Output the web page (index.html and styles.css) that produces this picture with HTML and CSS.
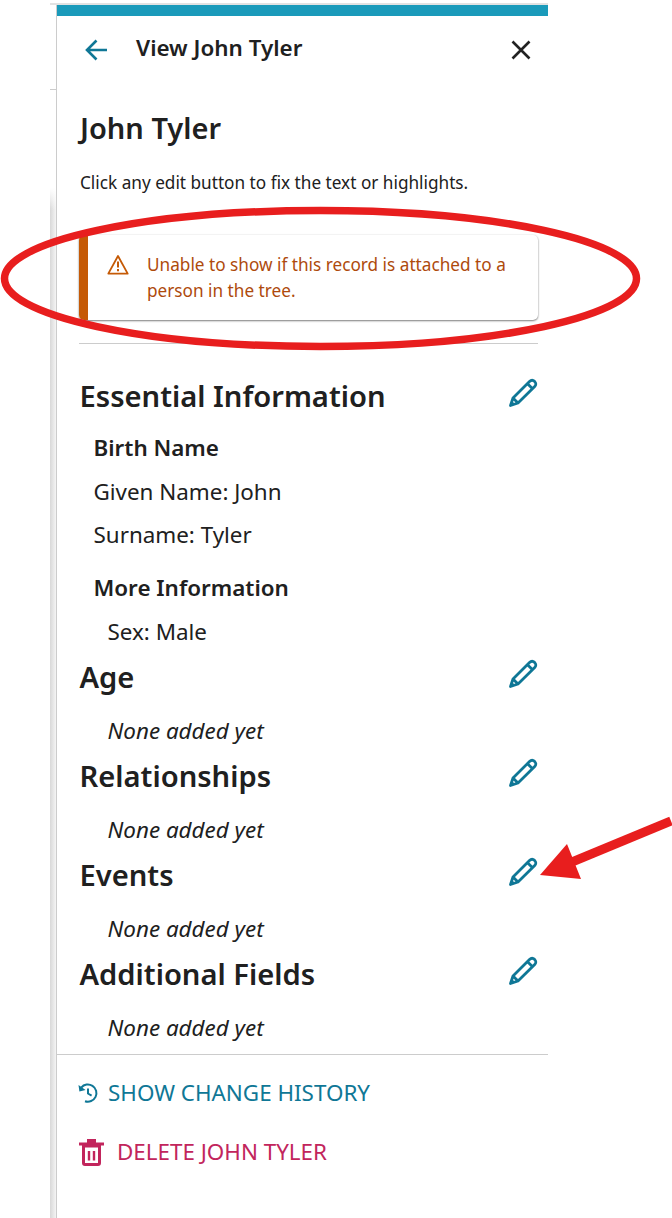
FILE: index.html
```html
<!DOCTYPE html>
<html lang="en">
<head>
<meta charset="utf-8">
<title>View John Tyler</title>
<link rel="stylesheet" href="styles.css">
</head>
<body>
  <svg width="0" height="0" class="defs">
    <symbol id="pencil" viewBox="0 0 30 30">
      <path d="M2.5 27.5 L5 20 L21.5 3.6 C23 2.1 25 2 26.6 3.4 C28.2 4.9 28.2 7 26.7 8.6 L10 25 Z M5 20 L10 25 M19.5 5.8 L24.6 10.8" fill="none" stroke="currentColor" stroke-width="2.8" stroke-linejoin="round"/>
      <path d="M2 28 L3.6 22.6 L7.4 26.4 Z" fill="currentColor"/>
    </symbol>
  </svg>

  <div class="backdrop-top"></div>
  <div class="backdrop-rule"></div>
  <div class="backdrop-side"></div>

  <div class="panel">
    <div class="top-bar"></div>
    <div class="header">
      <svg class="back" width="23" height="22" viewBox="0 0 23 22"><path d="M22 11 H2 M11.5 1.5 L2 11 L11.5 20.500" fill="none" stroke="#0f7796" stroke-width="2.6"/></svg>
      <div class="header-title">View John Tyler</div>
      <svg class="close" width="20" height="20" viewBox="0 0 20 20"><path d="M1.5 1.5 L18.5 18.5 M18.5 1.5 L1.5 18.5" fill="none" stroke="#222" stroke-width="2.6"/></svg>
    </div>

    <div class="content">
      <h1>John Tyler</h1>
      <p class="hint">Click any edit button to fix the text or highlights.</p>

      <div class="alert">
        <svg class="alert-icon" width="22" height="21" viewBox="0 0 22 21">
          <path d="M11 2 L20.7 19.6 H1.3 Z" fill="none" stroke="#c55a06" stroke-width="1.8" stroke-linejoin="round"/>
          <path d="M11 7.5 V13.5 M11 15 V17.2" fill="none" stroke="#c55a06" stroke-width="2"/>
        </svg>
        <div class="alert-text">Unable to show if this record is attached to a person in the tree.</div>
      </div>
      <hr class="rule">

      <div class="section-head first">
        <h2>Essential Information</h2>
        <svg class="edit"><use href="#pencil"/></svg>
      </div>
      <div class="group">
        <h3>Birth Name</h3>
        <p class="field">Given Name: John</p>
        <p class="field">Surname: Tyler</p>
        <h3 class="more">More Information</h3>
        <p class="field sex">Sex: Male</p>
      </div>

      <div class="section-head">
        <h2>Age</h2>
        <svg class="edit"><use href="#pencil"/></svg>
      </div>
      <p class="empty">None added yet</p>

      <div class="section-head">
        <h2>Relationships</h2>
        <svg class="edit"><use href="#pencil"/></svg>
      </div>
      <p class="empty">None added yet</p>

      <div class="section-head">
        <h2>Events</h2>
        <svg class="edit"><use href="#pencil"/></svg>
      </div>
      <p class="empty">None added yet</p>

      <div class="section-head">
        <h2>Additional Fields</h2>
        <svg class="edit"><use href="#pencil"/></svg>
      </div>
      <p class="empty">None added yet</p>
    </div>

    <div class="footer">
      <a class="action history" href="#">
        <svg width="22" height="22" viewBox="0 0 22 22"><path d="M4.2 5.6 A8.6 8.6 0 1 1 8 19.2 M11 6.5 V11.5 L14.6 13.6" fill="none" stroke="currentColor" stroke-width="2"/><path d="M1.5 3 L2.4 9.4 L8.6 8 Z" fill="currentColor"/></svg>
        SHOW CHANGE HISTORY
      </a>
      <a class="action delete" href="#">
        <svg width="26" height="28" viewBox="0 0 26 28"><path d="M0 4.5 H25 V7.500 H0 Z M8 1 H17 V4.500 H8 Z" fill="currentColor"/><path d="M4.500 8 H20.500 V25 Q20.500 26.500 19 26.500 H6 Q4.500 26.500 4.500 25 Z" fill="none" stroke="currentColor" stroke-width="3"/><path d="M10 13 V22.500 M15 13 V22.500" fill="none" stroke="currentColor" stroke-width="2.4"/></svg>
        DELETE JOHN TYLER
      </a>
    </div>
  </div>

  <!-- red markup drawn on top of the screenshot -->
  <svg class="markup" width="672" height="1218" viewBox="0 0 672 1218">
    <ellipse cx="320.500" cy="278.500" rx="316" ry="68" fill="none" stroke="#e81e1e" stroke-width="7.500"/>
    <path d="M671 821 L572 862" stroke="#e81e1e" stroke-width="9" fill="none"/>
    <path d="M540 875 L567 844 L581 879 Z" fill="#e81e1e"/>
  </svg>
</body>
</html>
```

FILE: styles.css
```css
html, body {
    margin: 0;
    padding: 0;
}

body {
    width: 672px;
    height: 1218px;
    overflow: hidden;
    position: relative;
    background-color: #fff;
    font-family: "Noto Sans", sans-serif;
    color: #202020;
}

.defs {
    position: absolute;
}

.backdrop-top {
    position: absolute;
    left: 50px;
    top: 3px;
    width: 498px;
    height: 2px;
    background-color: #e2e2e2;
}

.backdrop-rule {
    position: absolute;
    left: 50px;
    top: 89px;
    width: 6px;
    height: 1px;
    background-color: #ccc;
}

.backdrop-side {
    position: absolute;
    left: 50px;
    top: 188px;
    width: 6px;
    height: 1030px;
    background:
        linear-gradient(to bottom, #fff, rgba(255, 255, 255, 0) 22px),
        linear-gradient(to right, #d8d8d8, #f4f4f4);
}

.panel {
    position: absolute;
    left: 56px;
    top: 5px;
    width: 491px;
    height: 1213px;
    border-left: 1px solid #ccc;
    background-color: #fff;
    display: flex;
    flex-direction: column;
}

.top-bar {
    height: 11px;
    background-color: #1a9aba;
}

.header {
    display: flex;
    align-items: center;
    height: 64px;
    padding-top: 2px;
    padding-left: 28px;
    padding-right: 17px;
}

.back {
    margin-right: 28px;
}

.header-title {
    flex: 1;
    font-size: 22.4px;
    font-weight: 600;
    margin-top: -6px;
}

.content {
    flex: 1;
    padding-left: 22px;
    width: 459px;
}

h1 {
    margin: 27px 0 0 1px;
    font-size: 29px;
    line-height: 38px;
    font-weight: 600;
}

.hint {
    margin: 24px 0 0 1px;
    font-size: 17.2px;
    line-height: 24px;
}

.alert {
    margin-top: 40px;
    height: 85px;
    box-sizing: border-box;
    border-left: 9px solid #c55a06;
    border-radius: 5px;
    box-shadow: 0 1px 2px rgba(0, 0, 0, 0.5), 0 0 2px rgba(0, 0, 0, 0.08);
    display: flex;
    padding: 17px 20px 0 19px;
    color: #ae4a0c;
    font-size: 17.2px;
    line-height: 26px;
}

.alert-icon {
    flex: none;
    margin: 2px 18px 0 0;
}

.rule {
    margin: 23px 0 0;
    border: none;
    border-top: 1px solid #ccc;
}

.section-head {
    display: flex;
    justify-content: space-between;
    align-items: flex-start;
}

.section-head.first {
    margin-top: 33px;
}

h2 {
    margin: 0 0 0 0.5px;
    font-size: 29.15px;
    line-height: 38px;
    font-weight: 600;
}

.edit {
    width: 30px;
    height: 30px;
    color: #0f7796;
    margin-top: 1px;
}

.group {
    padding-left: 14.5px;
    padding-bottom: 12px;
}

h3 {
    margin: 19px 0 0;
    font-size: 22.4px;
    line-height: 28px;
    font-weight: 600;
}

h3.more {
    margin-top: 25px;
}

.field {
    margin: 15px 0 0;
    font-size: 22.4px;
    line-height: 28px;
}

h3 + .field {
    margin-top: 16px;
}

.field.sex {
    margin-left: 14px;
}

.empty {
    margin: 20px 0 11px 28.5px;
    font-size: 22.4px;
    line-height: 30px;
    font-style: italic;
}

.footer {
    border-top: 1px solid #ccc;
    height: 164px;
    box-sizing: border-box;
    padding: 23px 0 0 20px;
}

.action {
    display: flex;
    align-items: center;
    font-size: 22.4px;
    text-decoration: none;
    line-height: 30px;
}

.action svg {
    margin-right: 9px;
}

.history {
    color: #0f7796;
}

.delete {
    color: #c2255c;
    margin-top: 29px;
}

.delete svg {
    margin-left: 2px;
    margin-right: 12px;
}

.markup {
    position: absolute;
    left: 0;
    top: 0;
    pointer-events: none;
}
```
